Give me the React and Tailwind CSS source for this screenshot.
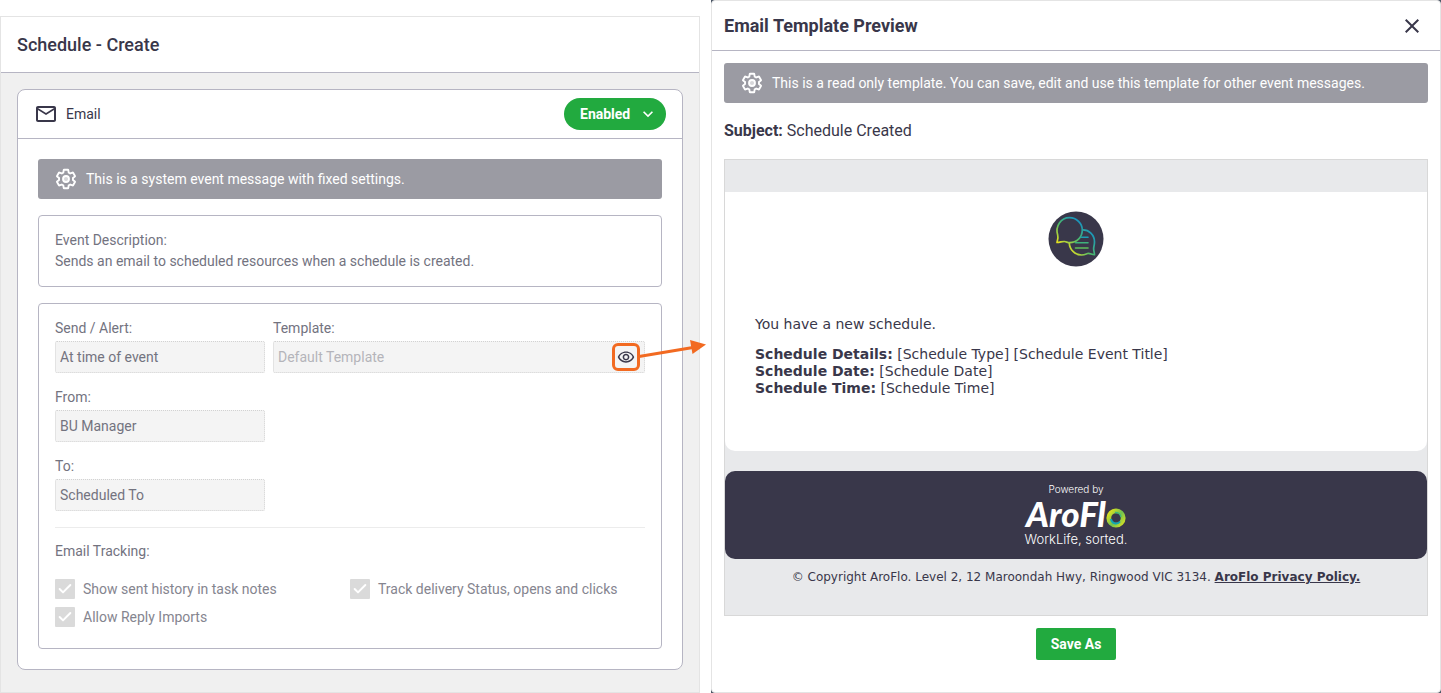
import React from 'react';
import { MdOutlineEmail, MdOutlineRemoveRedEye, MdClose, MdKeyboardArrowDown } from 'react-icons/md';
import { Check } from 'lucide-react';

const scheduleLines = [
  { label: 'Schedule Details:', value: '[Schedule Type] [Schedule Event Title]' },
  { label: 'Schedule Date:', value: '[Schedule Date]' },
  { label: 'Schedule Time:', value: '[Schedule Time]' },
];

function GearIcon() {
  return (
    <svg viewBox="0 0 24 24" className="size-6 shrink-0" fill="none" stroke="currentColor" aria-hidden="true">
      <g transform="translate(12 12) scale(0.93) translate(-12 -12)">
        <path
          strokeWidth="2"
          strokeLinejoin="round"
          d="M19.43 12.98c.04-.32.07-.64.07-.98 0-.34-.03-.66-.07-.98l2.11-1.65c.19-.15.24-.42.12-.64l-2-3.46c-.09-.16-.26-.25-.44-.25-.06 0-.12.01-.17.03l-2.49 1c-.52-.4-1.08-.73-1.69-.98l-.38-2.65C14.46 2.18 14.25 2 14 2h-4c-.25 0-.46.18-.49.42l-.38 2.65c-.61.25-1.17.59-1.69.98l-2.49-1c-.06-.02-.12-.03-.18-.03-.17 0-.34.09-.43.25l-2 3.46c-.13.22-.07.49.12.64l2.11 1.65c-.04.32-.07.65-.07.98 0 .33.03.66.07.98l-2.11 1.65c-.19.15-.24.42-.12.64l2 3.46c.09.16.26.25.44.25.06 0 .12-.01.17-.03l2.49-1c.52.4 1.08.73 1.69.98l.38 2.65c.03.24.24.42.49.42h4c.25 0 .46-.18.49-.42l.38-2.65c.61-.25 1.17-.59 1.69-.98l2.49 1c.06.02.12.03.18.03.17 0 .34-.09.43-.25l2-3.46c.12-.22.07-.49-.12-.64l-2.11-1.65z"
        />
        <circle cx="12" cy="12" r="3.200" strokeWidth="2" fill="currentColor" fillOpacity="0.6" />
      </g>
    </svg>
  );
}

function Banner({ children }) {
  return (
    <div className="flex items-center gap-2 h-10 px-4 rounded-[3px] bg-[#9b9ba3] text-white text-sm">
      <GearIcon />
      <span>{children}</span>
    </div>
  );
}

function Field({ id, label, value, muted, children }) {
  return (
    <div>
      <label htmlFor={id} className="block leading-[26px]">{label}</label>
      <div className="relative">
        <input
          id={id}
          type="text"
          disabled
          defaultValue={value}
          className={`block w-full h-8 px-1 rounded-xs border border-dotted border-[#d2d2d2] bg-[#f4f4f4] ${muted ? 'text-[#b4b4ba]' : 'text-[#73737f]'}`}
        />
        {children}
      </div>
    </div>
  );
}

function Tick({ label }) {
  return (
    <label className="flex items-center gap-2 leading-5">
      <span className="relative block size-5">
        <input type="checkbox" checked disabled readOnly className="block size-5 appearance-none rounded-[1px] bg-[#dadada]" />
        <Check size={16} strokeWidth={3} className="absolute inset-0.5 text-white" />
      </span>
      {label}
    </label>
  );
}

function ChatLogo() {
  return (
    <svg viewBox="0 0 56 56" className="size-14 shrink-0" fill="none" aria-hidden="true">
      <defs>
        <linearGradient id="bubbleLeft" x1="10" y1="32" x2="30" y2="8" gradientUnits="userSpaceOnUse">
          <stop offset="0" stopColor="#e6e21f" />
          <stop offset="0.5" stopColor="#4cb96b" />
          <stop offset="1" stopColor="#1593c4" />
        </linearGradient>
        <linearGradient id="bubbleRight" x1="22" y1="42" x2="46" y2="22" gradientUnits="userSpaceOnUse">
          <stop offset="0" stopColor="#e6e21f" />
          <stop offset="0.5" stopColor="#4cb96b" />
          <stop offset="1" stopColor="#1593c4" />
        </linearGradient>
      </defs>
      <circle cx="28" cy="28" r="27.500" fill="#39374a" />
      <path d="M9 31.5 C10 28.500 10.500 26.500 9.700 24 C7 15 13 6.700 21.500 6.700 C28.500 6.700 34.300 12.300 34.300 19 C34.300 26.500 28.500 31.700 21.500 31.700 C19.500 31.700 18.500 30.700 16.500 30.500 C14 30.300 12 31.500 9 31.500 Z" stroke="url(#bubbleLeft)" strokeWidth="1.700" strokeLinejoin="round" />
      <path d="M34 19 C41 18.500 46.500 24 46.500 31 C46.500 35 45.300 36 45.700 38.500 C45.800 40.500 46.500 41.500 46.500 43.700 C43.500 43.500 42 42 39.500 42.500 C37.500 43.300 36 44 33.500 44 C27 44 21.500 38.500 21.300 32" stroke="url(#bubbleRight)" strokeWidth="1.700" strokeLinejoin="round" />
      <path d="M33.500 26.300 H40" stroke="#1b9fb6" strokeWidth="1.600" strokeLinecap="round" />
      <path d="M27.500 31.700 H40" stroke="#3eb27c" strokeWidth="1.600" strokeLinecap="round" />
      <path d="M27.500 37 H40" stroke="#5fc05c" strokeWidth="1.600" strokeLinecap="round" />
    </svg>
  );
}

function AroFloLogo() {
  return (
    <div className="flex flex-col items-center text-white font-['Inter',sans-serif]">
      <span className="text-[10px] leading-3 font-light">Powered by</span>
      <div className="flex items-end h-9">
        <span className="font-['Lato',sans-serif] font-black italic text-[35px] leading-9">AroFl</span>
        <svg viewBox="0 0 20 20" className="size-5 mb-[3px]" fill="none" aria-hidden="true">
          <defs>
            <linearGradient id="ring" x1="2" y1="6" x2="16" y2="17" gradientUnits="userSpaceOnUse">
              <stop offset="0" stopColor="#d9e021" />
              <stop offset="0.55" stopColor="#6fc24f" />
              <stop offset="1" stopColor="#c8dc2a" />
            </linearGradient>
          </defs>
          <circle cx="10" cy="10" r="7.200" stroke="url(#ring)" strokeWidth="4.800" />
          <path d="M5 11 A5 5 0 0 0 14 13.500" stroke="#10a5b5" strokeWidth="2" />
          <path d="M9 4.500 A5.500 5.500 0 0 1 15 9" stroke="#3fb57a" strokeWidth="1.500" />
        </svg>
      </div>
      <span className="text-[13px] leading-4 font-light">WorkLife, sorted.</span>
    </div>
  );
}

function SchedulePanel() {
  return (
    <section className="min-w-0 mt-4 flex flex-col border border-[#e4e4e4] bg-[#f0f0f0]">
      <header className="flex items-center h-14 px-4 border-b border-[#b6b5c3] bg-white">
        <h1 className="text-lg font-medium">Schedule - Create</h1>
      </header>

      <div className="px-4 pt-4 pb-[22px]">
        <div className="rounded-lg border border-[#b6b5c3] bg-white">
          <div className="flex items-center justify-between h-[49px] px-4 border-b border-[#b6b5c3]">
            <div className="flex items-center gap-2 text-sm">
              <MdOutlineEmail size={24} />
              Email
            </div>
            <button type="button" className="flex items-center justify-between h-8 w-[102px] pl-4 pr-2 rounded-full bg-[#22aa3f] text-white text-sm font-bold">
              Enabled
              <MdKeyboardArrowDown size={20} />
            </button>
          </div>

          <div className="flex flex-col gap-4 p-5 text-sm text-[#73737f]">
            <Banner>This is a system event message with fixed settings.</Banner>

            <div className="px-4 py-[14px] rounded border border-[#b6b5c3] leading-[21px]">
              <p>Event Description:</p>
              <p>Sends an email to scheduled resources when a schedule is created.</p>
            </div>

            <div className="px-4 pt-[11px] pb-[21px] rounded border border-[#b6b5c3]">
              <div className="grid grid-cols-[210px_1fr] gap-x-2 gap-y-[11px]">
                <Field id="send" label="Send / Alert:" value="At time of event" />
                <Field id="template" label="Template:" value="Default Template" muted>
                  <button type="button" aria-label="Preview template" className="absolute right-[5px] top-[2px] flex items-center justify-center size-7 rounded-md border-3 border-[#f26a21] text-[#39374a]">
                    <MdOutlineRemoveRedEye size={18} />
                  </button>
                  {/* callout arrow to the preview panel */}
                  <svg viewBox="0 0 68 20" className="absolute left-full -ml-[6px] top-0 w-[68px] h-5 z-10 overflow-visible" aria-hidden="true">
                    <path d="M0 15.500 L54 6.500" stroke="#f26a21" strokeWidth="3" />
                    <path d="M51 -1 L67 3.500 L53.500 13 Z" fill="#f26a21" />
                  </svg>
                </Field>
                <div className="col-start-1">
                  <Field id="from" label="From:" value="BU Manager" />
                </div>
                <div className="col-start-1">
                  <Field id="to" label="To:" value="Scheduled To" />
                </div>
              </div>

              <hr className="mt-4 mb-[10px] border-[#ececec]" />

              <p className="leading-[26px]">Email Tracking:</p>
              <div className="grid grid-cols-2 gap-y-2 mt-[15px] text-[#85858f]">
                <Tick label="Show sent history in task notes" />
                <Tick label="Track delivery Status, opens and clicks" />
                <Tick label="Allow Reply Imports" />
              </div>
            </div>
          </div>
        </div>
      </div>
    </section>
  );
}

function PreviewPanel() {
  return (
    <section className="min-w-0 bg-gray-600">
      <div className="h-full rounded border border-[#e4e4e4] bg-white">
        <header className="flex items-center justify-between h-[50px] px-3 border-b border-[#b6b5c3]">
          <h2 className="text-lg font-bold">Email Template Preview</h2>
          <button type="button" aria-label="Close" className="mr-1">
            <MdClose size={24} />
          </button>
        </header>

        <div className="flex flex-col px-3 pt-3">
          <Banner>This is a read only template. You can save, edit and use this template for other event messages.</Banner>

          <p className="my-4 text-base leading-6">
            <strong className="font-bold">Subject:</strong> Schedule Created
          </p>

          <article className="pt-8 border border-[#d8d8d8] bg-[#e8e9eb] font-['Verdana','DejaVu_Sans',sans-serif]">
            <div className="flex flex-col pt-[19px] px-[30px] pb-[54px] rounded-b-[10px] bg-white text-sm leading-[17px]">
              <div className="flex justify-center">
                <ChatLogo />
              </div>
              <p className="mt-[49px] mb-[13px]">You have a new schedule.</p>
              {scheduleLines.map(line => (
                <p key={line.label}>
                  <strong>{line.label}</strong> {line.value}
                </p>
              ))}
            </div>

            <div className="flex items-center justify-center h-[88px] mt-5 rounded-[10px] bg-[#39374a]">
              <AroFloLogo />
            </div>

            <p className="pt-[10px] pb-[30px] text-center text-xs">
              © Copyright AroFlo. Level 2, 12 Maroondah Hwy, Ringwood VIC 3134.{' '}
              <a href="#privacy" className="font-bold underline">AroFlo Privacy Policy.</a>
            </p>
          </article>

          <button type="button" className="self-center w-20 h-8 mt-3 rounded-xs bg-[#22aa3f] text-white text-sm font-bold">
            Save As
          </button>
        </div>
      </div>
    </section>
  );
}

export default function App() {
  return (
    <div className="grid grid-cols-[70fr_73fr] gap-[11px] min-h-screen bg-white text-[#39374a] font-['Roboto',sans-serif]">
      <SchedulePanel />
      <PreviewPanel />
    </div>
  );
}
